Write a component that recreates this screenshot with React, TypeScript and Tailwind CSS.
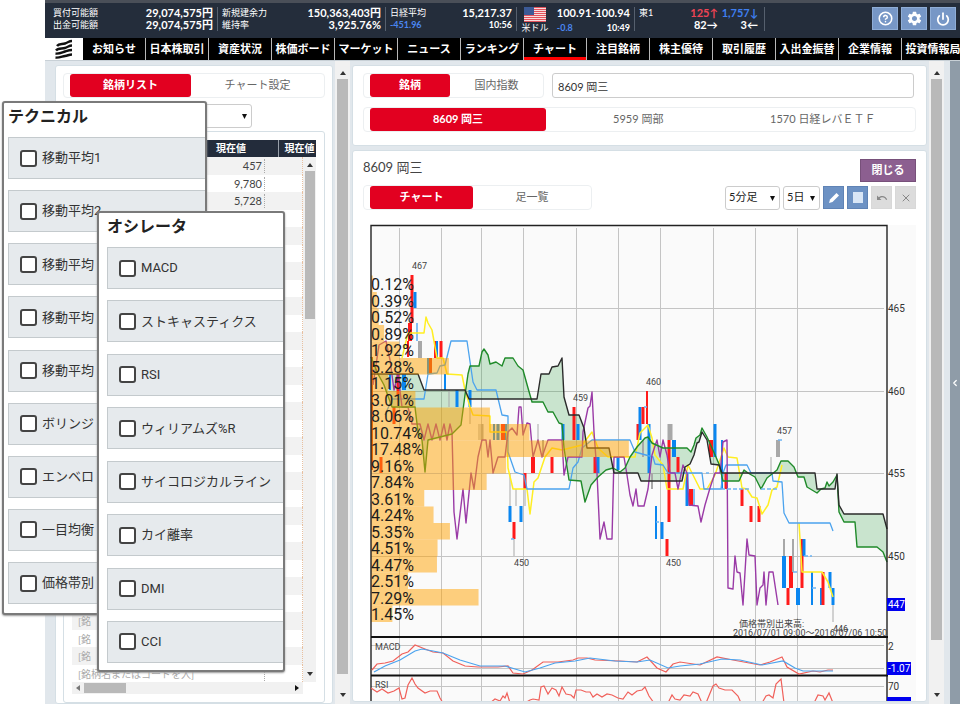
import { useState, type ReactNode } from 'react';
import clsx from 'clsx';
import { ChevronLeft, CircleHelp, Power, X } from 'lucide-react';
import { MdSettings, MdUndo } from 'react-icons/md';

const NAV = [
  'お知らせ',
  '日本株取引',
  '資産状況',
  '株価ボード',
  'マーケット',
  'ニュース',
  'ランキング',
  'チャート',
  '注目銘柄',
  '株主優待',
  '取引履歴',
  '入出金振替',
  '企業情報',
  '投資情報局',
];

const TECHNICAL = [
  '移動平均1',
  '移動平均2',
  '移動平均',
  '移動平均',
  '移動平均',
  'ボリンジ',
  'エンベロ',
  '一目均衡',
  '価格帯別',
];

const OSCILLATORS = [
  'MACD',
  'ストキャスティクス',
  'RSI',
  'ウィリアムズ%R',
  'サイコロジカルライン',
  'カイ離率',
  'DMI',
  'CCI',
];

const PRICES = ['457', '9,780', '5,728'];
const ROW_COUNT = 30;

// share of traded volume per price band, top band first
const VOLUME = [
  0.12, 0.39, 0.52, 0.89, 1.92, 5.28, 1.15, 3.01, 8.06, 10.74, 17.48, 9.16, 7.84, 3.61, 4.24, 5.35,
  4.51, 4.47, 2.51, 7.29, 1.45,
];

const GRID_X = [399, 441, 481, 523, 576, 618, 660, 713, 755, 797];
const GRID_Y = [308, 391, 473, 556];

const SPAN_A =
  '371,374 418,374 424,390 465,390 469,399 537,399 541,374 549,374 552,367 558,366 562,358 564,397 569,415 579,415 584,428 587,448 609,448 614,473 638,473 641,481 682,481 685,467 690,464 694,455 697,443 699,442 702,432 707,440 711,464 719,465 722,473 815,473 817,489 835,489 837,474 839,505 844,514 883,514 887,529';

const SPAN_B =
  '371,357 378,374 384,385 392,407 415,407 418,432 422,440 425,472 428,440 452,434 461,425 465,395 468,374 470,366 479,366 482,352 484,349 488,355 490,364 496,362 502,366 505,358 513,358 518,366 523,370 528,388 532,402 543,402 548,412 553,412 559,423 562,424 564,448 569,480 581,481 585,502 591,485 598,477 606,470 613,468 620,472 625,468 630,457 637,447 645,438 648,437 652,443 663,448 687,448 691,452 694,445 696,438 700,435 702,428 707,437 712,448 719,464 723,481 739,481 744,470 748,473 755,477 761,489 767,478 777,470 781,461 788,461 794,467 798,477 804,477 807,487 817,493 821,489 825,488 827,482 829,486 833,482 837,475 839,512 844,522 855,522 857,547 877,547 883,552 887,562';

const CLOUD = `${SPAN_A} ${SPAN_B.split(' ').reverse().join(' ')}`;

const BASE_LINE =
  '385,415 392,399 424,399 428,374 437,373 440,366 445,365 451,341 467,341 473,382 477,390 496,390 502,415 508,416 508,452 515,472 524,475 527,489 569,489 573,468 578,462 582,448 592,440 630,440 635,452 653,457 655,464 663,465 668,473 702,473 704,489 721,489 723,473 726,465 747,465 751,473 772,473 773,481 782,482 784,513 789,523 830,523 833,531';

const TURN_LINE =
  '402,358 408,333 424,333 426,317 428,323 432,330 437,358 443,358 447,374 462,375 465,390 470,407 473,415 490,416 490,432 507,432 508,468 513,489 527,489 530,514 534,482 538,478 545,457 552,448 562,450 582,445 592,432 598,448 608,457 635,457 640,433 648,425 652,438 655,455 663,465 667,489 683,489 688,465 693,475 700,489 707,489 715,475 724,448 728,457 737,458 742,488 747,489 752,497 757,498 762,514 768,505 772,490 777,487 782,465';

const TURN_LINE_2 = '799,523 802,572 822,572 828,582 833,597';

const LAG_LINE =
  '373,385 379,345 386,341 390,360 394,390 398,374 402,407 408,407 412,424 420,424 424,440 428,424 432,440 436,424 440,440 444,424 447,440 450,424 452,432 454,512 457,539 463,489 466,523 471,473 474,489 478,457 482,440 486,440 488,457 490,440 493,473 498,457 505,457 508,432 512,428 517,435 519,407 521,407 523,435 527,423 530,424 533,457 538,440 542,457 548,440 562,440 564,475 568,457 582,457 583,432 588,408 590,406 592,392 594,432 597,473 600,539 604,522 607,539 612,539 614,457 624,457 627,475 630,495 633,506 636,489 638,506 644,506 648,489 652,455 657,440 660,457 663,440 667,455 670,473 675,473 678,489 683,465 687,473 689,505 698,506 701,522 705,505 710,488 715,473 720,473 723,442 727,440 728,588 733,589 735,556 737,572 740,573 743,605 747,539 749,555 755,556 757,605 760,588 763,585 764,572 766,605 769,572 773,572 778,605';

const MACD_LINE =
  '372,670 377,664 385,663 393,661 402,654 408,652 415,645 425,649 433,652 443,653 453,661 465,666 478,667 498,667 508,666 513,673 523,674 532,670 543,662 558,662 573,660 578,658 587,658 595,660 620,661 637,662 647,657 657,668 666,672 673,664 680,662 700,665 717,657 733,660 760,665 770,662 782,657 787,667 799,674 813,671 820,672 828,670 833,670';

const MACD_SIGNAL =
  '374,672 385,666 400,660 415,651 422,649 433,651 443,653 460,660 480,666 505,666 515,669 525,672 540,668 555,663 575,661 590,658 615,661 637,662 650,660 668,668 680,666 700,664 722,659 740,660 762,665 783,661 795,668 803,671 833,671';

const RSI_LINES = [
  '371,688 377,692 382,689 388,693 394,691 399,688 402,699 405,698 408,685 412,678 415,684 418,688 425,693 430,691 437,691 440,698 443,703',
  '490,703 495,699 500,701 503,696 505,698 507,693 510,703',
  '525,703 530,700 533,699 539,700 541,687 544,686 548,694 552,688 556,690 559,696 562,687 566,694 571,695 574,698 576,690 581,690 586,692 590,692 593,697 597,694 602,697 607,694 612,695 618,698 623,699 628,692 632,695 637,691 642,690 645,687 649,696 654,703',
  '668,703 672,695 675,699 680,700 684,695 690,696 693,692 698,694 702,703',
  '706,703 713,686 716,684 719,688 725,690 732,690 738,696 741,703',
  '762,703 766,696 769,695 773,698 776,684 781,679 784,703',
  '814,703 818,695 823,696 825,700 829,693 833,703',
];

const RED = '#ff1a1a';
const BLUE = '#0a86f0';
const GREY = '#a8a8a8';

// x, top, bottom, width, colour
const CANDLES: [number, number, number, number, string][] = [
  [372, 357, 470, 2, '#d23a10'],
  [412, 275, 323, 3, RED],
  [415, 292, 308, 3, BLUE],
  [410, 323, 341, 4, RED],
  [408, 341, 357, 2, RED],
  [417, 323, 341, 1, BLUE],
  [420, 341, 358, 4, GREY],
  [436, 341, 358, 4, BLUE],
  [435, 341, 358, 2, RED],
  [441, 341, 358, 3, RED],
  [430, 358, 374, 4, '#e03818'],
  [428, 358, 374, 2, BLUE],
  [390, 374, 390, 2, BLUE],
  [398, 374, 395, 3, RED],
  [404, 374, 390, 4, BLUE],
  [394, 407, 424, 3, RED],
  [381, 457, 473, 3, RED],
  [445, 374, 390, 2, BLUE],
  [449, 390, 407, 1, GREY],
  [457, 390, 407, 3, BLUE],
  [470, 390, 407, 3, BLUE],
  [470, 407, 424, 1, GREY],
  [479, 424, 440, 1, GREY],
  [482, 424, 440, 3, GREY],
  [494, 424, 440, 2, BLUE],
  [498, 424, 440, 3, BLUE],
  [503, 424, 440, 4, RED],
  [506, 424, 440, 2, BLUE],
  [538, 424, 440, 1, GREY],
  [543, 440, 457, 2, GREY],
  [533, 457, 473, 4, RED],
  [552, 457, 473, 3, RED],
  [563, 424, 440, 3, BLUE],
  [574, 407, 440, 3, RED],
  [578, 424, 440, 3, BLUE],
  [510, 473, 506, 1, GREY],
  [510, 506, 522, 3, BLUE],
  [516, 489, 506, 1, GREY],
  [521, 506, 522, 3, BLUE],
  [525, 473, 489, 3, RED],
  [525, 489, 506, 1, GREY],
  [514, 522, 539, 3, RED],
  [514, 539, 556, 1, GREY],
  [595, 457, 473, 3, RED],
  [598, 457, 473, 3, BLUE],
  [618, 457, 470, 3, BLUE],
  [638, 424, 440, 3, RED],
  [640, 407, 440, 3, BLUE],
  [643, 407, 424, 3, RED],
  [647, 391, 424, 2, RED],
  [649, 424, 473, 3, BLUE],
  [643, 440, 457, 2, GREY],
  [652, 473, 489, 2, GREY],
  [670, 424, 440, 5, GREY],
  [669, 440, 522, 3, RED],
  [674, 440, 457, 4, BLUE],
  [678, 457, 473, 3, RED],
  [656, 506, 539, 2, BLUE],
  [662, 522, 539, 3, BLUE],
  [667, 539, 556, 3, RED],
  [687, 473, 506, 3, BLUE],
  [691, 489, 506, 4, RED],
  [694, 489, 506, 1, BLUE],
  [711, 440, 457, 4, RED],
  [715, 424, 457, 3, BLUE],
  [722, 440, 489, 2, BLUE],
  [726, 473, 489, 3, RED],
  [742, 489, 506, 3, RED],
  [751, 506, 522, 3, RED],
  [759, 506, 522, 3, RED],
  [771, 457, 473, 1, GREY],
  [778, 440, 457, 4, GREY],
  [784, 539, 556, 2, GREY],
  [784, 556, 588, 4, BLUE],
  [788, 588, 605, 3, RED],
  [791, 556, 588, 4, RED],
  [793, 539, 572, 2, GREY],
  [798, 588, 605, 4, BLUE],
  [802, 539, 588, 3, RED],
  [804, 539, 556, 3, BLUE],
  [812, 572, 605, 2, BLUE],
  [821, 588, 605, 2, BLUE],
  [823, 572, 605, 3, RED],
  [830, 572, 588, 3, BLUE],
  [833, 588, 605, 3, BLUE],
  [833, 605, 622, 1, GREY],
];

const PEAKS: [number, number, string][] = [
  [412, 269, '467'],
  [573, 401, '459'],
  [646, 385, '460'],
  [777, 434, '457'],
  [514, 566, '450'],
  [666, 566, '450'],
  [833, 632, '446'],
];

function App() {
  return (
    <div className="relative h-screen overflow-hidden bg-white font-[Lato,'Noto_Sans_CJK_JP',sans-serif] text-[11px] text-[#444]">
      <div className="ml-[45px] flex h-full flex-col bg-[#e1e7ec]">
        <Header />
        <Nav />
        <div className="flex min-h-0 flex-1">
          <StockList />
          <Scrollbar thumb="h-[595px]" />
          <div className="flex min-w-0 flex-1 flex-col gap-1 pt-1">
            <SymbolPanel />
            <ChartPanel />
          </div>
          <Scrollbar thumb="h-[561px]" />
          <button type="button" aria-label="開く" className="ml-1 flex w-[10px] items-center justify-center bg-[#8f9ca8] text-white">
            <ChevronLeft size={10} strokeWidth={3} />
          </button>
        </div>
      </div>
      <CheckPopup title="テクニカル" items={TECHNICAL} place="left-[2px] top-[101px] h-[514px] w-[205px] pb-[9px] pl-[4px]" />
      <CheckPopup title="オシレータ" items={OSCILLATORS} place="left-[97px] top-[211px] h-[461px] w-[188px] pb-[7px] pl-[8px]" />
    </div>
  );
}

function Header() {
  return (
    <header className="flex h-[38px] shrink-0 border-t-3 border-[#4a4f58] bg-[#242d3b] text-white">
      <Stat className="w-[173px] pl-2" rows={[['買付可能額', '29,074,575円'], ['出金可能額', '29,074,575円']]} />
      <Stat className="w-[168px] pl-1" rows={[['新規建余力', '150,363,403円'], ['維持率', '3,925.76%']]} />
      <div className="mt-1 flex h-6 w-[131px] justify-between border-r border-[#56606e] pr-1 pl-1 leading-[12px]">
        <div className="text-[9px]">
          <p>日経平均</p>
          <p className="font-bold text-[#4a86f0]">-451.96</p>
        </div>
        <div className="text-right">
          <p className="font-bold">15,217.37</p>
          <p className="text-[9px] font-bold">10:56</p>
        </div>
      </div>
      <div className="mt-1 flex h-6 w-[118px] justify-between border-r border-[#56606e] pr-1 pl-[2px] leading-[12px]">
        <div className="flex w-8 flex-col items-center text-[9px]">
          <UsFlag />
          <p className="whitespace-nowrap">米ドル</p>
        </div>
        <div>
          <p className="font-bold">100.91-100.94</p>
          <p className="mt-[3px] flex justify-between text-[9px] font-bold">
            <span className="text-[#4a86f0]">-0.8</span>
            <span>10:49</span>
          </p>
        </div>
      </div>
      <div className="mt-1 flex h-6 w-[130px] border-r border-[#56606e] pr-[6px] pl-1 leading-[12px]">
        <p className="text-[9px]">東1</p>
        <div className="ml-auto text-right font-bold">
          <p className="text-[#ee4455]">125↑</p>
          <p>82→</p>
        </div>
        <div className="ml-1 text-right font-bold">
          <p className="text-[#3f7ff0]">1,757↓</p>
          <p>3←</p>
        </div>
      </div>
      <div className="mt-1 mr-1 ml-auto flex gap-[3px]">
        <HeaderButton label="ヘルプ"><CircleHelp size={15} strokeWidth={2.5} /></HeaderButton>
        <HeaderButton label="設定"><MdSettings size={17} /></HeaderButton>
        <HeaderButton label="ログアウト"><Power size={14} strokeWidth={3} /></HeaderButton>
      </div>
    </header>
  );
}

function Stat({ rows, className }: { rows: [string, string][]; className: string }) {
  return (
    <dl className={clsx('mt-1 h-6 border-r border-[#56606e] pr-1 leading-[12px]', className)}>
      {rows.map(([name, value]) => (
        <div key={name} className="flex justify-between">
          <dt className="text-[9px]">{name}</dt>
          <dd className="font-bold">{value}</dd>
        </div>
      ))}
    </dl>
  );
}

function HeaderButton({ label, children }: { label: string; children: ReactNode }) {
  return (
    <button
      type="button"
      aria-label={label}
      className="flex h-[23px] w-[26px] items-center justify-center border border-[#8fadd6] bg-[#7797c6] text-white"
    >
      {children}
    </button>
  );
}

function UsFlag() {
  return (
    <svg width="22" height="15" viewBox="0 0 22 15" className="shrink-0">
      <rect width="22" height="15" fill="#f8dcdc" />
      {[0, 2, 4, 6, 8, 10, 12, 14].map((y) => (
        <rect key={y} y={y} width="22" height="1" fill="#e2525c" />
      ))}
      <rect width="10" height="8" fill="#3c5a96" />
    </svg>
  );
}

function Nav() {
  return (
    <nav className="flex h-[23px] shrink-0 overflow-hidden border-b border-[#c8d0d6] bg-black">
      <div className="flex w-[38px] shrink-0 items-center justify-center bg-white">
        <svg width="20" height="20" viewBox="0 0 20 20" fill="none" stroke="#111" strokeWidth="2.400">
          <path d="M3 7C5 4 8 5.500 11 4.500S15 2 18 2" />
          <path d="M2 11.500C4 9 8 10 11 9S15 6.500 18 6.500" />
          <path d="M1.500 14.500C5 15 8 13.500 11 12.500S15 11 18 11" />
          <path d="M1.500 18.500C5 19 8 17.500 11 17S15 15.500 18 15.500" />
        </svg>
      </div>
      {NAV.map((name) => (
        <a
          key={name}
          href="#"
          className={clsx(
            'flex min-w-[63px] flex-1 items-center justify-center border-r border-[#b8b8b8] text-[11px] font-bold whitespace-nowrap text-white',
            name === 'チャート' && 'shadow-[inset_0_-3px_0_#f00]',
          )}
        >
          {name}
        </a>
      ))}
    </nav>
  );
}

function Scrollbar({ thumb }: { thumb: string }) {
  return (
    <div aria-hidden className="mx-[2px] flex w-[15px] shrink-0 flex-col items-center bg-[#f1f1f1] pt-[10px] pb-[7px]">
      <Arrow d="M0 4L3 0L6 4z" />
      <div className={clsx('mt-1 w-[11px] bg-[#b9b9b9]', thumb)} />
      <Arrow d="M0 0L3 4L6 0z" className="mt-auto" />
    </div>
  );
}

function Arrow({ d, className }: { d: string; className?: string }) {
  return (
    <svg width="6" height="4" viewBox="0 0 6 4" className={clsx('shrink-0', className)}>
      <path d={d} fill="#333" />
    </svg>
  );
}

function Tab({ active, className, children, onClick }: {
  active?: boolean;
  className: string;
  children: ReactNode;
  onClick?: () => void;
}) {
  return (
    <button
      type="button"
      onClick={onClick}
      className={clsx(
        'h-[23px] rounded-[3px] whitespace-nowrap',
        active ? 'bg-[#e20020] font-bold text-white' : 'text-[#666]',
        className,
      )}
    >
      {children}
    </button>
  );
}

function TabBar({ className, children }: { className?: string; children: ReactNode }) {
  return (
    <div className={clsx('flex h-[25px] rounded-[4px] border border-[#eceff1] pl-[6px]', className)}>
      {children}
    </div>
  );
}

function Dropdown({ label, options, className }: { label: string; options: string[]; className: string }) {
  return (
    <div className={clsx('relative', className)}>
      <select
        aria-label={label}
        className="h-6 w-full appearance-none rounded-[3px] border border-[#ccc] bg-white px-[3px] text-[11px] text-[#222]"
      >
        {options.map((option) => (
          <option key={option}>{option}</option>
        ))}
      </select>
      <svg width="5" height="5" viewBox="0 0 5 5" className="pointer-events-none absolute top-[10px] right-[5px]">
        <path d="M0 0H5L2.500 5z" fill="#111" />
      </svg>
    </div>
  );
}

function rowHint(i: number) {
  if (i === ROW_COUNT - 1) return '[銘柄名またはコードを入]';
  return i > ROW_COUNT - 5 ? '[銘' : '';
}

function StockList() {
  return (
    <section className="mt-1 ml-[10px] flex w-[278px] shrink-0 flex-col rounded-[3px] border border-[#d5dfe5] bg-white px-[7px] pt-[7px]">
      <TabBar>
        <Tab active className="w-[121px]">銘柄リスト</Tab>
        <Tab className="flex-1">チャート設定</Tab>
      </TabBar>
      <Dropdown label="リスト" options={['']} className="mt-[6px] w-[189px]" />
      <div className="mt-[3px] flex min-h-0 flex-1 flex-col rounded-[3px] border border-[#d5dfe5] px-2 pt-2 pb-2">
        <div className="flex min-h-0 flex-1 overflow-hidden">
          <div className="relative z-10 min-w-0 flex-1">
            <table className="w-full table-fixed border-collapse">
              <thead>
                <tr className="h-[17px] bg-[#232c3b] text-[10px] leading-[17px] text-white">
                  <th className="w-[136px] p-0" />
                  <th className="w-[70px] border-r border-[#98a0aa] p-0 pl-2 text-left">現在値</th>
                  {/* last heading runs on over the scrollbar gutter */}
                  <th className="p-0 pl-[6px] text-left whitespace-nowrap">現在値</th>
                </tr>
              </thead>
              <tbody>
                {Array.from({ length: ROW_COUNT }, (_, i) => (
                  <tr key={i} className="odd:h-[18px] odd:bg-[#f2f2f2] even:h-[17px]">
                    <td className="overflow-hidden p-0 pl-[6px] text-[10px] leading-[14px] whitespace-nowrap text-[#aaa]">
                      {rowHint(i)}
                    </td>
                    <td className="p-0 pr-[13px] leading-[14px] text-[#444]">
                      <p className="h-[14px] border-r border-dotted border-[#aaa] pr-[2px] text-right">{PRICES[i] ?? ''}</p>
                    </td>
                    <td className="border-r border-dotted border-[#e8c0a0] p-0" />
                  </tr>
                ))}
              </tbody>
            </table>
          </div>
          <div aria-hidden className="flex w-[13px] flex-col bg-[#f1f1f1]">
            <div className="h-[17px] shrink-0 bg-[#232c3b]" />
            <div className="flex flex-1 flex-col items-center py-[6px]">
              <Arrow d="M0 4L3 0L6 4z" />
              <div className="mt-1 h-[148px] w-[10px] bg-[#b9b9b9]" />
              <Arrow d="M0 0L3 4L6 0z" className="mt-auto" />
            </div>
          </div>
        </div>
        <div aria-hidden className="mr-[13px] flex h-3 shrink-0 items-center bg-[#f1f1f1] px-1">
          <svg width="4" height="6" viewBox="0 0 4 6"><path d="M4 0L0 3L4 6z" fill="#777" /></svg>
          <div className="ml-1 h-[10px] w-[42px] bg-[#b9b9b9]" />
          <svg width="4" height="6" viewBox="0 0 4 6" className="ml-auto"><path d="M0 0L4 3L0 6z" fill="#111" /></svg>
        </div>
      </div>
    </section>
  );
}

function SymbolPanel() {
  return (
    <section className="rounded-[3px] border border-[#d5dfe5] bg-white px-[10px] pt-[7px] pb-[13px]">
      <div className="flex gap-2">
        <TabBar className="w-[181px] shrink-0">
          <Tab active className="w-[80px]">銘柄</Tab>
          <Tab className="flex-1">国内指数</Tab>
        </TabBar>
        <input
          type="text"
          aria-label="銘柄検索"
          defaultValue="8609 岡三"
          className="mr-[2px] h-[25px] min-w-0 flex-1 rounded-[3px] border border-[#ccc] bg-white px-[5px] text-[11px] text-[#333]"
        />
      </div>
      <TabBar className="mt-[9px]">
        <Tab active className="w-[176px]">8609 岡三</Tab>
        <Tab className="flex-1">5959 岡部</Tab>
        <Tab className="flex-1">1570 日経レバＥＴＦ</Tab>
      </TabBar>
    </section>
  );
}

function ChartPanel() {
  const [view, setView] = useState<'chart' | 'list'>('chart');

  return (
    <section className="mb-[2px] min-h-0 flex-1 overflow-hidden rounded-[3px] border border-[#d5dfe5] bg-white px-[10px] pt-2">
      <div className="flex justify-between">
        <h1 className="text-[13px] leading-4">8609 岡三</h1>
        <button type="button" className="h-[23px] w-[56px] border border-[#77507a] bg-[#8c5f90] font-bold text-white">
          閉じる
        </button>
      </div>
      <div className="mt-[3px] flex items-center gap-[3px]">
        <TabBar className="mr-auto w-[229px]">
          <Tab active={view === 'chart'} className="w-[103px]" onClick={() => setView('chart')}>チャート</Tab>
          <Tab active={view === 'list'} className="flex-1" onClick={() => setView('list')}>足一覧</Tab>
        </TabBar>
        <Dropdown label="足種" options={['5分足', '日足']} className="w-[55px]" />
        <Dropdown label="期間" options={['5日', '1日']} className="w-[37px]" />
        <ToolButton label="描画" on>
          <svg width="12" height="12" viewBox="0 0 12 12"><path d="M1 11L2 7.500L8.500 1L11 3.500L4.500 10z" fill="#fff" /></svg>
        </ToolButton>
        <ToolButton label="範囲" on>
          <svg width="10" height="11" viewBox="0 0 10 11"><rect width="10" height="11" fill="#d9e6f6" /></svg>
        </ToolButton>
        <ToolButton label="元に戻す"><MdUndo size={12} /></ToolButton>
        <ToolButton label="消去"><X size={12} /></ToolButton>
      </div>
      <PriceChart />
    </section>
  );
}

function ToolButton({ label, on, children }: { label: string; on?: boolean; children: ReactNode }) {
  return (
    <button
      type="button"
      aria-label={label}
      className={clsx(
        'flex h-[23px] w-[21px] items-center justify-center border',
        on ? 'border-[#5f83b5] bg-[#6d92c4] text-white' : 'border-[#d8d8d8] bg-[#dcdcdc] text-[#888]',
      )}
    >
      {children}
    </button>
  );
}

function PriceChart() {
  return (
    <svg width="553" height="492" viewBox="363 210 553 492" className="block font-[Roboto,'Noto_Sans_CJK_JP',sans-serif]">
      <rect x="371" y="225" width="545" height="478" fill="#fafafa" />

      <g stroke="#c4c4c4" strokeWidth="1">
        {GRID_X.map((x) => (
          <line key={x} x1={x + 0.5} x2={x + 0.5} y1="228" y2="702" />
        ))}
        {[...GRID_Y, 645, 668, 686].map((y) => (
          <line key={y} x1="371" x2="884" y1={y + 0.5} y2={y + 0.5} />
        ))}
      </g>

      <polygon points={CLOUD} fill="#2f9e44" fillOpacity="0.24" />

      {CANDLES.map(([x, top, bottom, width, color], i) => (
        <rect key={i} x={x - width / 2} y={top} width={width} height={bottom - top} fill={color} />
      ))}

      <g fill="none" strokeWidth="1.3" strokeLinejoin="round">
        <polyline points={TURN_LINE} stroke="#ffee22" strokeWidth="1.5" />
        <polyline points={TURN_LINE_2} stroke="#ffee22" strokeWidth="1.5" />
        <polyline points={BASE_LINE} stroke="#4ba3ee" />
        <polyline points={LAG_LINE} stroke="#9a3aa6" strokeWidth="1.4" />
        <polyline points={SPAN_B} stroke="#1f8a2a" strokeWidth="1.4" />
        <polyline points={SPAN_A} stroke="#2b2b2b" strokeWidth="1.4" />
        <path
          d="M644 407h3M778 440h5M721 489h30M761 489h16M706 473h3M656 522h3M804 556h8M812 588h6M793 572h4M514 539h-3"
          stroke="#6cb4f4"
          strokeDasharray="4 2"
        />
      </g>

      <g fill="#ffa200" fillOpacity="0.5">
        {VOLUME.map((v, i) => (
          <rect key={i} x="371" y={275.5 + i * 16.5} width={v * 14.75} height="16.5" />
        ))}
      </g>

      <g fill="none" stroke="#222">
        <path d="M371 702V225.500H887V702" strokeWidth="1.4" />
        <path d="M371 637H888M371 675.500H888" strokeWidth="2" stroke="#111" />
      </g>

      <g fontSize="16" fill="#1c1c1c">
        {VOLUME.map((v, i) => (
          <text key={i} x="371" y={290 + i * 16.5}>{v.toFixed(2)}%</text>
        ))}
      </g>

      <g fontSize="9" fill="#444">
        {PEAKS.map(([x, y, text]) => (
          <text key={`${x}-${y}`} x={x} y={y}>{text}</text>
        ))}
        <text x="739" y="627">価格帯別出来高:</text>
        <text x="887" y="636" textAnchor="end">2016/07/01 09:00～2016/07/06 10:50</text>
        <text x="375" y="650">MACD</text>
        <text x="375" y="688">RSI</text>
      </g>

      <g fill="none" strokeWidth="1.2">
        <polyline points={MACD_LINE} stroke="#f0605a" />
        <polyline points={MACD_SIGNAL} stroke="#4ba3ee" />
        {RSI_LINES.map((points) => (
          <polyline key={points} points={points} stroke="#f0605a" />
        ))}
      </g>

      <g fontSize="10" fill="#333">
        <text x="888" y="312">465</text>
        <text x="888" y="395">460</text>
        <text x="888" y="477">455</text>
        <text x="888" y="560">450</text>
        <text x="888" y="650">2</text>
        <text x="888" y="690">70</text>
      </g>
      <g fill="#0000f0">
        <rect x="887" y="598" width="18" height="13" />
        <rect x="887" y="662" width="24" height="13" />
        <rect x="887" y="697" width="24" height="5" />
      </g>
      <g fontSize="10" fill="#fff">
        <text x="888" y="608">447</text>
        <text x="888" y="672">-1.07</text>
      </g>
    </svg>
  );
}

function CheckPopup({ title, items, place }: { title: string; items: string[]; place: string }) {
  return (
    <section
      className={clsx(
        "absolute z-20 flex flex-col overflow-hidden rounded-[3px] border-2 border-[#7a7a7a] bg-white font-[Roboto,'Noto_Sans_CJK_JP',sans-serif] shadow-[0_1px_2px_#999]",
        place,
      )}
    >
      <h2 className="h-[34px] shrink-0 text-[16px] leading-[27px] font-bold text-[#222]">{title}</h2>
      <div className="flex min-h-0 flex-1 flex-col justify-between">
        {items.map((item, i) => (
          <label
            key={i}
            className="flex h-[42px] items-center gap-[5px] border border-r-0 border-[#c4cacd] bg-[#e6eaed] pl-[11px] text-[13px] whitespace-nowrap text-[#333]"
          >
            <input type="checkbox" className="size-[17px] shrink-0 appearance-none rounded-[3px] border-2 border-[#444] bg-white" />
            {item}
          </label>
        ))}
      </div>
    </section>
  );
}

export default App;
